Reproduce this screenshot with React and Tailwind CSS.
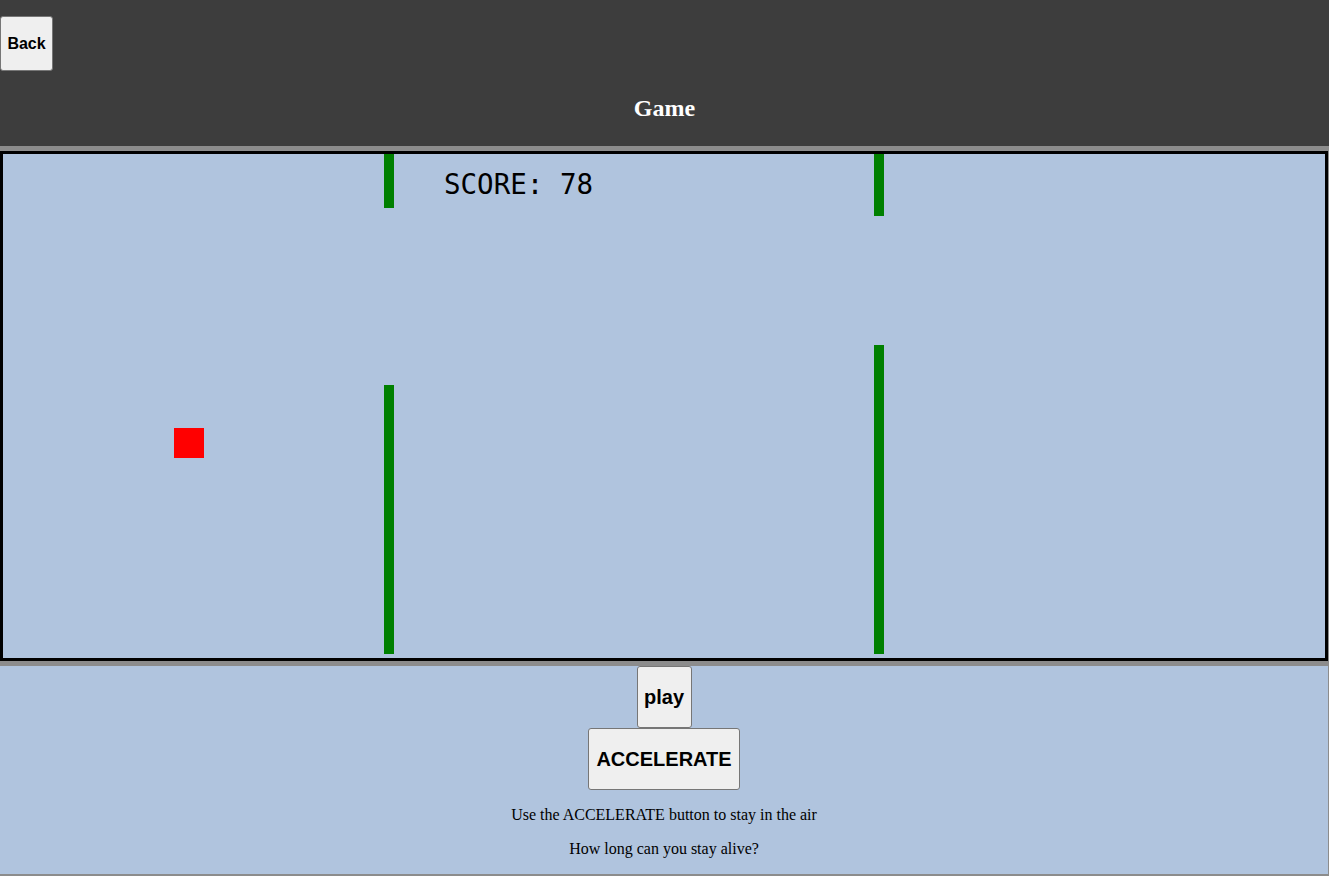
import React from 'react';

const pipes = [
  { left: 381, topH: 54, bottomTop: 231, bottomH: 269 },
  { left: 871, topH: 62, bottomTop: 191, bottomH: 309 },
];

const btn =
  "bg-[#efefef] border border-[#767676] rounded-[3px] font-bold text-black font-['Liberation_Sans',Arial,sans-serif]";

const App = () => {
  return (
    <div className="min-h-screen bg-[#8c8c8c] font-['Liberation_Serif','Times_New_Roman',serif]">
      {/* header */}
      <div className="h-[146px] bg-[#3d3d3d] flex flex-col">
        <button className={`${btn} self-start mt-[16px] w-[53px] h-[55px] text-[16px] leading-[18px]`}>
          Back
        </button>
        <h2 className="mt-[23px] text-center text-white text-[24px] leading-[28px] font-bold">
          Game
        </h2>
      </div>

      {/* game canvas */}
      <div className="mt-[5px] w-[1328px] h-[510px] border-[3px] border-black bg-[#b0c4de] relative overflow-hidden">
        {pipes.map((p, i) => (
          <React.Fragment key={i}>
            <div className="absolute top-0 w-[10px] bg-[#008000]" style={{ left: p.left, height: p.topH }} />
            <div className="absolute w-[10px] bg-[#008000]" style={{ left: p.left, top: p.bottomTop, height: p.bottomH }} />
          </React.Fragment>
        ))}
        <div className="absolute left-[171px] top-[274px] w-[30px] h-[30px] bg-[#ff0000]" />
        <div className="absolute left-[441px] top-[17px] text-[27.5px] leading-none text-black font-['DejaVu_Sans_Mono',monospace]">
          SCORE: 78
        </div>
      </div>

      {/* controls */}
      <div className="mt-[5px] w-[1328px] bg-[#b0c4de] flex flex-col items-center">
        <button className={`${btn} h-[62px] w-[55px] text-[20px] leading-[23px]`}>play</button>
        <button className={`${btn} h-[62px] w-[152px] text-[20px] leading-[23px]`}>ACCELERATE</button>
        <p className="my-4 text-[16px] leading-[18px] text-black">Use the ACCELERATE button to stay in the air</p>
        <p className="mb-4 text-[16px] leading-[18px] text-black">How long can you stay alive?</p>
      </div>
    </div>
  );
};

export default App;
